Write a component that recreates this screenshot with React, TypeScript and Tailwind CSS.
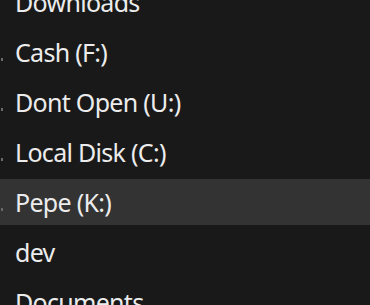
import React from 'react';

interface NavItem {
  label: string;
  hasChildren?: boolean;
  selected?: boolean;
}

const items: NavItem[] = [
  { label: 'Downloads' },
  { label: 'Cash (F:)', hasChildren: true },
  { label: 'Dont Open (U:)', hasChildren: true },
  { label: 'Local Disk (C:)', hasChildren: true },
  { label: 'Pepe (K:)', hasChildren: true, selected: true },
  { label: 'dev' },
  { label: 'Documents' },
];

const NavRow: React.FC<{ item: NavItem }> = ({ item }) => (
  <div className="h-[50px] py-[2px]">
    <div className={`flex h-full items-center ${item.selected ? 'bg-[#333333]' : ''}`}>
      <div className="flex h-full w-[15px] items-center">
        {item.hasChildren && <span className="ml-[1px] mt-[14px] h-[3px] w-[2px] bg-[#6a6a6a]" />}
      </div>
      <span className="whitespace-nowrap text-[25px] leading-none tracking-[-0.7px] text-[#ececec]">{item.label}</span>
    </div>
  </div>
);

export default function App() {
  return (
    <div
      className="h-[305px] w-[370px] overflow-hidden bg-[#191919]"
      style={{ fontFamily: '"Noto Sans", "Open Sans", sans-serif' }}
    >
      <div className="-mt-[23px] flex flex-col">
        {items.map((item) => (
          <NavRow key={item.label} item={item} />
        ))}
      </div>
    </div>
  );
}
